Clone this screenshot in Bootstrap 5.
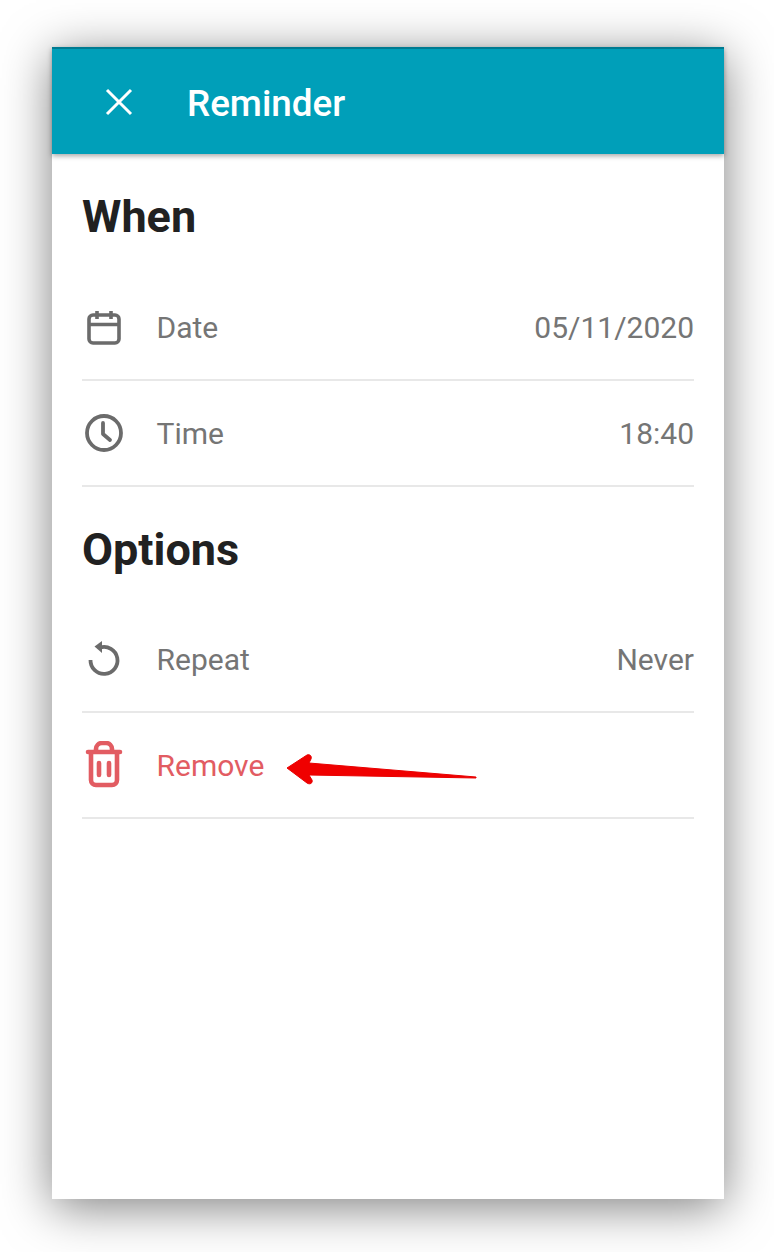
<!DOCTYPE html>
<html lang="en">

<head>
    <meta charset="UTF-8">
    <meta name="viewport" content="width=device-width, initial-scale=1.0">
    <title>Reminder</title>
    <link href="https://cdn.jsdelivr.net/npm/bootstrap@5.3.0/dist/css/bootstrap.min.css" rel="stylesheet">
    <script src="https://cdn.jsdelivr.net/npm/bootstrap@5.3.0/dist/js/bootstrap.bundle.min.js"></script>
    <style>
        body {
            background: #fff;
            font-family: Roboto, sans-serif;
            height: 1252px;
            overflow: hidden;
            padding-top: 47px;
        }

        .phone-screen {
            width: 672px;
            height: 1152px;
            margin-left: 52px;
            background: #fff;
            position: relative;
            box-shadow: 0 8px 46px rgba(0, 0, 0, .5);
        }

        .app-bar {
            height: 107px;
            background: #009fb9;
            border-top: 2px solid #007b91;
            padding-left: 52px;
            box-shadow: 0 2px 5px rgba(0, 0, 0, .35);
            color: #fff;
        }

        .app-bar svg {
            width: 30px;
            height: 30px;
            margin-right: 53px;
        }

        .app-title {
            font-size: 36.8px;
            font-weight: 500;
            line-height: 1;
            padding-top: 5px;
        }

        .sheet-body {
            padding: 0 30px;
        }

        .section-title {
            height: 121px;
            font-size: 45px;
            font-weight: 700;
            color: #212121;
            margin: 0;
            padding-top: 4px;
        }

        .section-title:first-child {
            height: 122px;
            padding-top: 4px;
        }

        .section-title + .option-row {
            margin-top: -1px;
            padding-top: 1px;
        }

        .option-row {
            height: 106px;
            border-bottom: 2px solid #e8e8e8;
            color: #757575;
            font-size: 30px;
        }

        .option-row.is-danger {
            color: #e25c62;
        }

        .row-icon {
            width: 75px;
            flex: none;
        }

        .row-icon svg {
            display: block;
            width: 44px;
            height: 44px;
        }

        .row-icon svg.tall-icon {
            height: 48px;
        }

        .row-label {
            margin-left: -.5px;
        }

        .red-arrow {
            position: absolute;
            left: 232px;
            top: 704px;
            width: 196px;
            height: 36px;
        }
    </style>
</head>

<body>
    <div class="phone-screen">
        <div class="app-bar d-flex align-items-center">
            <svg viewBox="0 0 30 30" fill="none" stroke="#fff" stroke-width="3">
                <path d="M3 3 27 27M27 3 3 27" />
            </svg>
            <span class="app-title">Reminder</span>
        </div>

        <div class="sheet-body">
            <h2 class="section-title d-flex align-items-center">When</h2>

            <div class="option-row d-flex align-items-center">
                <div class="row-icon">
                    <svg viewBox="0 0 44 44" fill="none" stroke="#6b6b6b" stroke-width="3.6" stroke-linejoin="round">
                        <rect x="7" y="9" width="30" height="28" rx="4" />
                        <path d="M7 18.5h30M15 5v8M29 5v8" />
                    </svg>
                </div>
                <span class="row-label">Date</span>
                <span class="ms-auto">05/11/2020</span>
            </div>

            <div class="option-row d-flex align-items-center">
                <div class="row-icon">
                    <svg viewBox="0 0 44 44" fill="none" stroke="#6b6b6b" stroke-width="3.8" stroke-linecap="round" stroke-linejoin="round">
                        <circle cx="22" cy="22" r="17" />
                        <path d="M21 12v11l7 6" />
                    </svg>
                </div>
                <span class="row-label">Time</span>
                <span class="ms-auto">18:40</span>
            </div>

            <h2 class="section-title d-flex align-items-center">Options</h2>

            <div class="option-row d-flex align-items-center">
                <div class="row-icon">
                    <svg viewBox="0 0 44 44" fill="none" stroke="#6b6b6b" stroke-width="3.8">
                        <path d="M18 9.5A13.5 13.5 0 1 1 8.5 22" />
                        <path d="M20 3 12.5 8.5 20 15z" fill="#6b6b6b" stroke="none" />
                    </svg>
                </div>
                <span class="row-label">Repeat</span>
                <span class="ms-auto">Never</span>
            </div>

            <div class="option-row is-danger d-flex align-items-center">
                <div class="row-icon">
                    <svg class="tall-icon" viewBox="0 -2 44 48" fill="none" stroke="#e25c62" stroke-width="4.6" stroke-linejoin="round" stroke-linecap="round">
                        <path d="M6 9h32M9 9v28a5 5 0 0 0 5 5h16a5 5 0 0 0 5-5V9M14 9V6a6 6 0 0 1 6-6h4a6 6 0 0 1 6 6v3M17 20v12M27 20v12" />
                    </svg>
                </div>
                <span class="row-label">Remove</span>
            </div>
        </div>

        <svg class="red-arrow" viewBox="0 0 196 36">
            <path d="M3 17 23 4c3-1 5 1 4 4l-2 4 167 14v1L25 24l3 5c1 3-2 5-5 3z" fill="#f00000" stroke="#e80000" stroke-linejoin="round" />
        </svg>
    </div>
</body>

</html>
